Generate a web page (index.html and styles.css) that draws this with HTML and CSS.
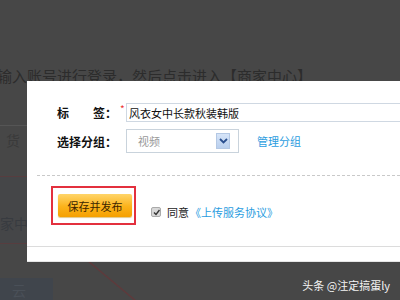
FILE: index.html
```html
<!DOCTYPE html>
<html lang="zh-CN">
  <head>
    <meta charset="UTF-8" />
    <meta name="viewport" content="width=device-width, initial-scale=1.0" />
    <title>保存并发布</title>
    <link rel="stylesheet" href="styles.css">
  </head>
  <body>
    <!-- 遮罩下面的页面 -->
    <div class="page">
      <p class="tip">输入账号进行登录，然后点击进入【商家中心】</p>
      <div class="bar">货</div>
      <div class="band">
        <span class="band-text">家中</span>
      </div>
      <div class="cloud">云</div>
    </div>
    <svg class="slash" width="60" height="40" viewBox="0 0 60 40">
      <line x1="1" y1="0" x2="49" y2="40" stroke="#5e3a3c" stroke-width="1.5" />
    </svg>

    <!-- 弹窗 -->
    <div class="dialog">
      <div class="dialog-body">
        <div class="row row-tag">
          <span class="label">标&#12288;&#12288;签：</span>
          <span class="star">*</span>
          <input class="text" type="text" value="风衣女中长款秋装韩版" />
        </div>
        <div class="row row-group">
          <span class="label">选择分组：</span>
          <div class="select">
            <span class="select-text">视频</span>
            <span class="select-btn">
              <svg width="9" height="6" viewBox="0 0 9 6">
                <polyline points="1,1 4.5,4.5 8,1" fill="none" stroke="#2a4f8f" stroke-width="1.8" />
              </svg>
            </span>
          </div>
          <a class="link" href="">管理分组</a>
        </div>
        <div class="divider"></div>
        <div class="actions">
          <div class="mark">
            <button class="publish">保存并发布</button>
          </div>
          <label class="agree">
            <span class="check">
              <svg width="7" height="7" viewBox="0 0 7 7">
                <polyline points="1,3.5 3,5.5 6.5,1" fill="none" stroke="#333" stroke-width="1.4" />
              </svg>
            </span>
            同意<a class="link" href="">《上传服务协议》</a>
          </label>
        </div>
      </div>
      <div class="dialog-foot"></div>
    </div>

    <div class="watermark">头条 @注定搞蛋ly</div>
  </body>
</html>
```

FILE: styles.css
```css
* {
  margin: 0;
  padding: 0;
  box-sizing: border-box;
}
body {
  width: 400px;
  height: 300px;
  overflow: hidden;
  position: relative;
  background: #474747;
  font-family: "Noto Sans CJK SC", "Liberation Sans", sans-serif;
  font-size: 12px;
  color: #222;
}

/* 遮罩下面的页面 */
.page {
  padding-top: 67px;
}
.tip {
  margin-left: -3px;
  font-size: 15px;
  line-height: 18px;
  color: #2c2c2c;
  white-space: nowrap;
}
.bar {
  margin-top: 40px;
  height: 52px;
  padding: 4px 0 0 6px;
  border-top: 1px solid #555;
  border-bottom: 1px solid #573d3f;
  font-size: 14px;
  color: #3a3a3a;
}
.band {
  height: 67px;
  padding-top: 36px;
  background: #454648;
  border-bottom: 1px solid #573d3f;
}
.band-text {
  font-size: 14px;
  color: #383b40;
}
.cloud {
  margin-top: 34px;
  width: 53px;
  height: 24px;
  padding: 2px 0 0 12px;
  background: #40454c;
  font-size: 14px;
  color: #4a5058;
}
.slash {
  position: absolute;
  left: 87px;
  top: 261px;
}

/* 弹窗 */
.dialog {
  position: absolute;
  left: 27px;
  top: 81px;
  right: 0;
  background: #fff;
}
.dialog-body {
  height: 166px;
  padding-top: 22px;
  border-bottom: 1px solid #dcdcdc;
}
.dialog-foot {
  height: 15px;
  border-bottom: 1px solid #e6e6e6;
}
.row {
  display: flex;
  align-items: center;
  padding-left: 30px;
}
.label {
  width: 63px;
  font-weight: bold;
  font-size: 12px;
  color: #111;
  white-space: nowrap;
}
.star {
  width: 6px;
  color: #e33;
  font-size: 10px;
  align-self: flex-start;
  line-height: 12px;
}
.row-tag {
  height: 19px;
}
.text {
  flex: 1;
  height: 19px;
  padding-left: 2px;
  border: 1px solid #cfd8e2;
  border-right: none;
  font-family: inherit;
  font-size: 11px;
  color: #111;
  outline: none;
}
.row-group {
  margin-top: 7px;
  height: 24px;
}
.row-group .label {
  width: 69px;
}
.select {
  display: flex;
  align-items: center;
  width: 113px;
  height: 24px;
  padding: 0 8px 0 11px;
  border: 1px solid #c9d3dc;
}
.select-text {
  flex: 1;
  font-size: 11px;
  color: #999;
}
.select-btn {
  display: flex;
  align-items: center;
  justify-content: center;
  width: 14px;
  height: 16px;
  background: linear-gradient(#d6e4f8, #b9cfee);
  border: 1px solid #b4c8e4;
}
.link {
  color: #2b9de0;
  text-decoration: none;
  font-size: 11px;
}
.row-group .link {
  margin-left: 18px;
}
.divider {
  margin: 22px 0 0 10px;
  border-top: 1px dashed #c9c9c9;
}
.actions {
  display: flex;
  align-items: flex-end;
  padding: 10px 0 0 24px;
}
.mark {
  width: 85px;
  height: 39px;
  padding: 6px 2px 6px 5px;
  border: 2px solid #e3303e;
}
.publish {
  display: block;
  width: 74px;
  height: 23px;
  border: none;
  border-radius: 2px;
  background: linear-gradient(#ffd56a, #fbb21a 55%, #f5a000);
  box-shadow: 0 1px 1px #e2c98a;
  font-family: inherit;
  font-size: 11px;
  color: #3a2400;
}
.agree {
  display: flex;
  align-items: center;
  margin: 0 0 5px 15px;
  font-size: 11px;
  color: #222;
}
.check {
  display: flex;
  align-items: center;
  justify-content: center;
  width: 10px;
  height: 10px;
  margin-right: 6px;
  background: #d8d8d8;
  border: 1px solid #aaa;
  border-radius: 2px;
}
.agree .link {
  margin-left: 1px;
}

.watermark {
  position: absolute;
  right: 10px;
  bottom: 7px;
  font-size: 11px;
  color: #f4f4f4;
  white-space: nowrap;
}
```
